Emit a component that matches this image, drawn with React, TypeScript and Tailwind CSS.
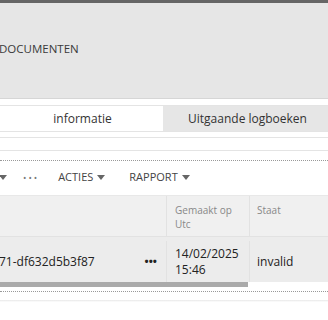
const font = { fontFamily: '"Open Sans", "Noto Sans", sans-serif' };

const Caret = () => (
  <svg width="8" height="5" viewBox="0 0 8 5" className="inline-block">
    <path d="M0 0h8L4 5z" fill="#666" />
  </svg>
);

const App = () => {
  return (
    <div className="w-[328px] h-[320px] overflow-hidden bg-white text-[#333]" style={font}>
      <div className="h-[3px] bg-[#666]" />
      <div className="h-[96px] bg-[#e6e6e6] border-b border-[#d6d6d6] flex items-center">
        <span className="text-[11.5px] -ml-[1px] -mt-[4px] text-[#3a3a3a]">DOCUMENTEN</span>
      </div>

      <div className="mt-[6px] flex h-[27px] border-y border-[#e4e4e4] text-[12px]">
        <div className="w-[163px] flex items-center justify-center pl-[2px]">informatie</div>
        <div className="flex-1 bg-[#e6e6e6] flex items-center justify-center pl-[4px]">Uitgaande logboeken</div>
      </div>

      <div className="mt-[5px] h-[14px] border-y border-[#e4e4e4]" />

      <div className="mt-[9px] border-t border-dotted border-[#999]" />

      <div className="h-[31px] flex items-center text-[11px] text-[#444] pt-[2px]">
        <span className="-ml-[1px] flex items-center"><Caret /></span>
        <span className="ml-[16px] tracking-[2px] text-[#777] text-[9px]">•••</span>
        <span className="ml-[19px] flex items-center gap-[4px]">ACTIES <Caret /></span>
        <span className="ml-[24px] flex items-center gap-[4px]">RAPPORT <Caret /></span>
      </div>

      <div className="mt-[3px] border-t border-[#e8e8e8]">
        <div className="flex h-[41px] bg-[#f0f0f0] border-b border-[#e2e2e2] text-[10px] text-[#888] leading-[14px]">
          <div className="w-[167px] border-r border-[#e2e2e2]" />
          <div className="w-[83px] border-r border-[#e2e2e2] px-[8px] pt-[7px]">Gemaakt op<br />Utc</div>
          <div className="flex-1 px-[7px] pt-[7px]">Staat</div>
        </div>
        <div className="flex h-[45px] bg-[#ececec] text-[12px] text-[#222] pt-[4px]">
          <div className="w-[167px] border-r border-[#e2e2e2] flex items-center justify-between pr-[9px]">
            <span className="-ml-[1px]">71-df632d5b3f87</span>
            <span className="text-[11px] font-bold">•••</span>
          </div>
          <div className="w-[83px] border-r border-[#e2e2e2] px-[8px] flex flex-col justify-center leading-[16px]">
            <span>14/02/2025</span>
            <span>15:46</span>
          </div>
          <div className="flex-1 px-[7px] flex items-center">invalid</div>
        </div>
        <div className="h-[5px] w-[248px] bg-[#aaa]" />
      </div>

      <div className="mt-[4px] border-t border-dotted border-[#999]" />
      <div className="mt-[8px] h-[2px] bg-gradient-to-b from-[#e8e8e8] to-white" />
    </div>
  );
};

export default App;
